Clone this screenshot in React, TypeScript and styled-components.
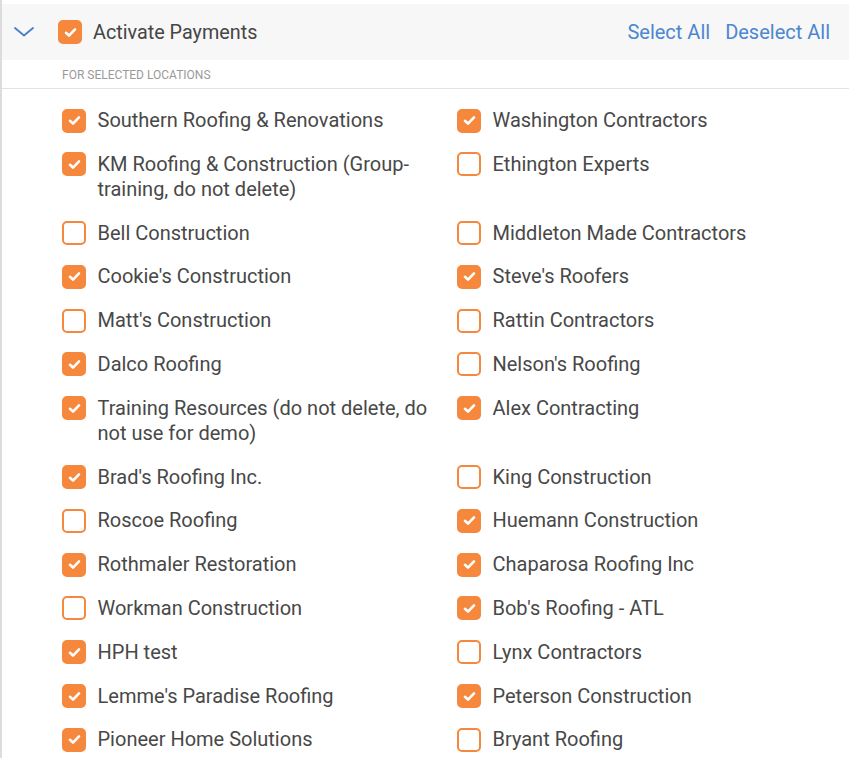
import React, { useState } from "react";
import styled, { createGlobalStyle } from "styled-components";

const GlobalStyle = createGlobalStyle`
  html, body { margin: 0; padding: 0; background: #ffffff; }
  body { font-family: Roboto, "Liberation Sans", Arial, sans-serif; }
`;

const Panel = styled.div`
  width: 849px;
  min-height: 758px;
  border-left: 2px solid #dcdcdc;
  padding-top: 4px;
  box-sizing: border-box;
`;

const Header = styled.div`
  height: 56px;
  background: #f7f7f7;
  display: flex;
  align-items: center;
  padding: 0 19px 0 11px;
`;

const Chevron = styled.button`
  border: none;
  background: none;
  padding: 0;
  width: 22px;
  height: 14px;
  display: flex;
  align-items: center;
  justify-content: center;
  cursor: pointer;
  margin-right: 23px;
`;

const HeaderTitle = styled.span`
  font-size: 19.8px;
  color: #454545;
  margin-left: 11px;
`;

const Actions = styled.div`
  margin-left: auto;
  display: flex;
  gap: 15px;
`;

const LinkButton = styled.button`
  border: none;
  background: none;
  padding: 0;
  font-family: inherit;
  font-size: 20px;
  color: #4b86d1;
  cursor: pointer;
`;

const SubLabel = styled.div`
  height: 29px;
  box-sizing: border-box;
  padding: 8px 0 0 60px;
  font-size: 12px;
  color: #9a9a9a;
  text-transform: uppercase;
  border-bottom: 1px solid #e3e3e3;
`;

const List = styled.div`
  display: grid;
  grid-template-columns: 395px 395px;
  row-gap: 18.8px;
  padding: 19px 0 0 60px;
`;

const Item = styled.label`
  display: flex;
  align-items: flex-start;
  gap: 11.5px;
  padding-right: 15px;
  cursor: pointer;
`;

const Box = styled.span<{ $checked: boolean }>`
  flex: none;
  width: 24px;
  height: 24px;
  box-sizing: border-box;
  border-radius: 5px;
  margin-top: 0.5px;
  display: flex;
  align-items: center;
  justify-content: center;
  background: ${(p) => (p.$checked ? "#f6883d" : "#ffffff")};
  border: 2px solid #f6883d;
`;

const ItemText = styled.span`
  font-size: 20px;
  line-height: 25px;
  color: #484848;
`;

const Check = () => (
  <svg width="13" height="11" viewBox="0 0 13 11" fill="none">
    <path d="M2 5.8 L5 8.6 L11 2.4" stroke="#fff" strokeWidth="2.6" strokeLinecap="round" strokeLinejoin="round" />
  </svg>
);

const Checkbox = ({ checked }: { checked: boolean }) => (
  <Box $checked={checked}>{checked && <Check />}</Box>
);

const items: [string, boolean][] = [
  ["Southern Roofing & Renovations", true],
  ["Washington Contractors", true],
  ["KM Roofing & Construction (Group-training, do not delete)", true],
  ["Ethington Experts", false],
  ["Bell Construction", false],
  ["Middleton Made Contractors", false],
  ["Cookie's Construction", true],
  ["Steve's Roofers", true],
  ["Matt's Construction", false],
  ["Rattin Contractors", false],
  ["Dalco Roofing", true],
  ["Nelson's Roofing", false],
  ["Training Resources (do not delete, do not use for demo)", true],
  ["Alex Contracting", true],
  ["Brad's Roofing Inc.", true],
  ["King Construction", false],
  ["Roscoe Roofing", false],
  ["Huemann Construction", true],
  ["Rothmaler Restoration", true],
  ["Chaparosa Roofing Inc", true],
  ["Workman Construction", false],
  ["Bob's Roofing - ATL", true],
  ["HPH test", true],
  ["Lynx Contractors", false],
  ["Lemme's Paradise Roofing", true],
  ["Peterson Construction", true],
  ["Pioneer Home Solutions", true],
  ["Bryant Roofing", false],
];

export default function App() {
  const [state, setState] = useState(items.map((i) => i[1]));
  return (
    <>
      <GlobalStyle />
      <Panel>
        <Header>
          <Chevron aria-label="collapse">
            <svg width="20" height="10" viewBox="0 0 20 10" fill="none">
              <path d="M1 1 L10 8.5 L19 1" stroke="#4a7fc4" strokeWidth="1.8" strokeLinecap="round" strokeLinejoin="round" />
            </svg>
          </Chevron>
          <Checkbox checked />
          <HeaderTitle>Activate Payments</HeaderTitle>
          <Actions>
            <LinkButton onClick={() => setState(state.map(() => true))}>Select All</LinkButton>
            <LinkButton onClick={() => setState(state.map(() => false))}>Deselect All</LinkButton>
          </Actions>
        </Header>
        <SubLabel>For selected locations</SubLabel>
        <List>
          {items.map(([name], i) => (
            <Item key={name} onClick={() => setState(state.map((v, j) => (j === i ? !v : v)))}>
              <Checkbox checked={state[i]} />
              <ItemText>{name}</ItemText>
            </Item>
          ))}
        </List>
      </Panel>
    </>
  );
}
